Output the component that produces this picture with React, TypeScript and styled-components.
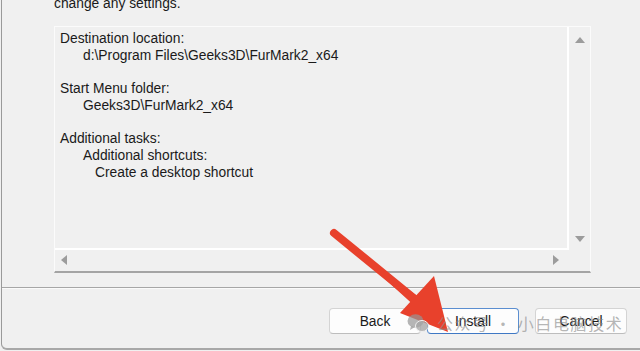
import { createGlobalStyle, styled } from 'styled-components'

const Global = createGlobalStyle`
  html, body {
    margin: 0;
    padding: 0;
    background: #f0f0f0;
    overflow: hidden;
  }
  body {
    font-family: "Liberation Sans", Arial, sans-serif;
    color: #1a1a1a;
  }
`

const Page = styled.div`
  position: relative;
  width: 640px;
  height: 351px;
  padding-left: 1px;
  box-sizing: border-box;
  overflow: hidden;
`

const Window = styled.div`
  height: 350px;
  box-sizing: border-box;
  border-left: 1px solid #9a9a9a;
  border-bottom: 2px solid #a8a8a8;
  border-bottom-left-radius: 6px;
  display: flex;
  flex-direction: column;
`

const Body = styled.div`
  padding-left: 52px;
  height: 287px;
  box-sizing: border-box;
`

const Intro = styled.div`
  font-size: 13.8px;
  line-height: 17px;
  margin-top: -5px;
  height: 14px;
  margin-bottom: 17px;
`

const Memo = styled.div`
  width: 537px;
  height: 247px;
  box-sizing: border-box;
  border: 1px solid #fbfbfb;
  border-bottom: 2px solid #a4a4a4;
  display: grid;
  grid-template-columns: 1fr 21px;
  grid-template-rows: 1fr 21px;
`

const MemoText = styled.div`
  border-right: 2px solid #ffffff;
  border-bottom: 2px solid #ffffff;
  padding: 4px 0 0 5px;
  font-size: 13.8px;
  line-height: 16.7px;
  white-space: pre;
`

const Line = styled.div<{ $indent?: number }>`
  padding-left: ${p => (p.$indent ?? 0)}px;
  min-height: 16.7px;
`

const VScroll = styled.div`
  display: flex;
  flex-direction: column;
  justify-content: space-between;
  align-items: center;
  padding: 10px 0 8px;
`

const HScroll = styled.div`
  grid-column: 1 / 3;
  display: flex;
  justify-content: space-between;
  align-items: center;
  padding: 0 31px 2px 6px;
`

const Arrow = styled.div<{ $dir: 'up' | 'down' | 'left' | 'right' }>`
  width: 0;
  height: 0;
  ${p => p.$dir === 'up' && 'border-left: 5px solid transparent; border-right: 5px solid transparent; border-bottom: 6px solid #9c9c9c;'}
  ${p => p.$dir === 'down' && 'border-left: 5px solid transparent; border-right: 5px solid transparent; border-top: 6px solid #9c9c9c;'}
  ${p => p.$dir === 'left' && 'border-top: 5px solid transparent; border-bottom: 5px solid transparent; border-right: 6px solid #9c9c9c;'}
  ${p => p.$dir === 'right' && 'border-top: 5px solid transparent; border-bottom: 5px solid transparent; border-left: 6px solid #9c9c9c;'}
`

const Separator = styled.div`
  height: 1px;
  background: #a6a6a6;
  border-bottom: 1px solid #fafafa;
`

const Footer = styled.div`
  display: flex;
  justify-content: flex-end;
  padding: 19px 13px 0 0;
`

const Button = styled.button<{ $primary?: boolean; $gap?: number }>`
  width: 92px;
  height: 26px;
  margin-left: ${p => p.$gap ?? 0}px;
  border-radius: 4px;
  background: #fdfdfd;
  border: 1px solid ${p => (p.$primary ? '#5b8ed0' : '#d4d4d4')};
  border-bottom-color: ${p => (p.$primary ? '#3f78c4' : '#bdbdbd')};
  font-family: "Liberation Sans", Arial, sans-serif;
  font-size: 13.8px;
  color: #1a1a1a;
  padding: 0;
`

const Watermark = styled.div`
  position: absolute;
  left: 407px;
  top: 311px;
  display: flex;
  align-items: center;
  gap: 8px;
  color: rgba(140, 140, 140, 0.65);
  font-family: "Noto Sans CJK SC", sans-serif;
  font-size: 16px;
  letter-spacing: 1.6px;
  pointer-events: none;
`

const Overlay = styled.svg`
  position: absolute;
  left: 0;
  top: 0;
  pointer-events: none;
`

export default function App() {
  return (
    <Page>
      <Global />
      <Window>
        <Body>
          <Intro>change any settings.</Intro>
          <Memo>
            <MemoText>
              <Line>Destination location:</Line>
              <Line $indent={23}>d:\Program Files\Geeks3D\FurMark2_x64</Line>
              <Line />
              <Line>Start Menu folder:</Line>
              <Line $indent={23}>Geeks3D\FurMark2_x64</Line>
              <Line />
              <Line>Additional tasks:</Line>
              <Line $indent={23}>Additional shortcuts:</Line>
              <Line $indent={35}>Create a desktop shortcut</Line>
            </MemoText>
            <VScroll>
              <Arrow $dir="up" />
              <Arrow $dir="down" />
            </VScroll>
            <HScroll>
              <Arrow $dir="left" />
              <Arrow $dir="right" />
            </HScroll>
          </Memo>
        </Body>
        <Separator />
        <Footer>
          <Button>Back</Button>
          <Button $primary $gap={6}>Install</Button>
          <Button $gap={16}>Cancel</Button>
        </Footer>
      </Window>
      <Overlay width="640" height="351" viewBox="0 0 640 351">
        <path d="M331 230 L336 236 L424 301 L418 309 Z" fill="#e8412c" />
        <line x1="334" y1="233" x2="421" y2="304" stroke="#e8412c" strokeWidth="8" strokeLinecap="round" />
        <polygon points="434,276 448,332 400,313" fill="#e8412c" />
      </Overlay>
      <Watermark>
        <svg width="22" height="20" viewBox="0 0 22 20">
          <ellipse cx="8.5" cy="8" rx="8" ry="6.8" fill="rgba(150,150,150,0.7)" />
          <path d="M4 13 L3 17 L7.5 14.2 Z" fill="rgba(150,150,150,0.7)" />
          <ellipse cx="15" cy="13" rx="6.5" ry="5.5" fill="rgba(165,165,165,0.75)" stroke="#f0f0f0" strokeWidth="1" />
        </svg>
        <span>公众号 · 小白电脑技术</span>
      </Watermark>
    </Page>
  )
}
